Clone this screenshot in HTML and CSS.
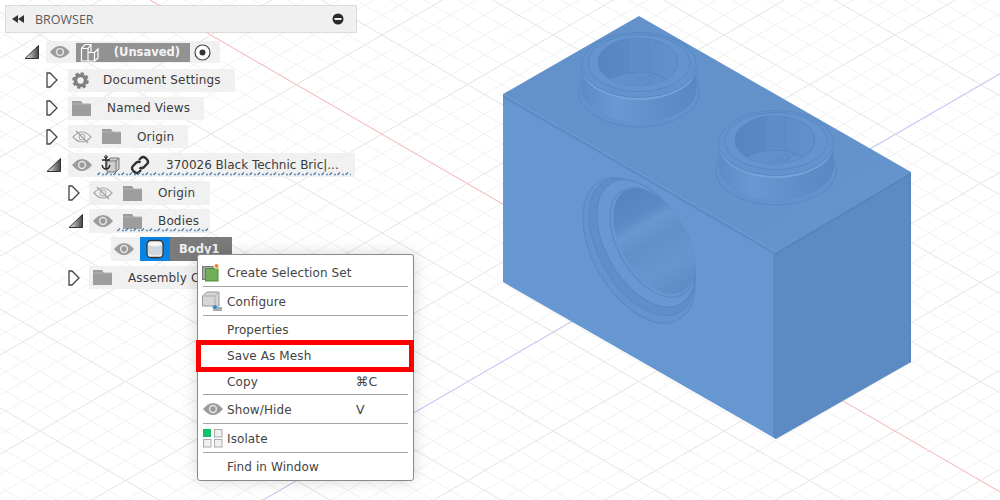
FILE: index.html
```html
<!DOCTYPE html>
<html lang="en">
<head>
<meta charset="utf-8">
<title>Browser</title>
<link rel="stylesheet" href="styles.css">
</head>
<body>
<svg class="canvas" width="1000" height="500" viewBox="0 0 1000 500">
  <defs>
    <pattern id="grid" patternUnits="userSpaceOnUse" x="40" y="35" width="171" height="99">
      <g class="gm">
        <path d="M0 -79.2L171 19.8M0 -59.4L171 39.6M0 -39.6L171 59.4M0 -19.8L171 79.2M0 19.8L171 118.8M0 39.6L171 138.6M0 59.4L171 158.4M0 79.2L171 178.2"/>
        <path d="M0 19.8L171 -79.2M0 39.6L171 -59.4M0 59.4L171 -39.6M0 79.2L171 -19.8M0 118.8L171 19.8M0 138.6L171 39.6M0 158.4L171 59.4M0 178.2L171 79.2"/>
      </g>
      <g class="gj"><path d="M0 0L171 99M0 99L171 0"/></g>
    </pattern>
    <linearGradient id="side" x1="0" x2="1" y1="0" y2="0">
      <stop offset="0" stop-color="#5c8bc5"/><stop offset=".3" stop-color="#6999d3"/>
      <stop offset=".55" stop-color="#6291cb"/><stop offset="1" stop-color="#5888c2"/>
    </linearGradient>
    <linearGradient id="disc" x1="0" y1=".5" x2="1" y2=".5">
      <stop offset="0" stop-color="#5484bd"/><stop offset=".25" stop-color="#5b8ac4"/>
      <stop offset=".34" stop-color="#6898d0"/><stop offset=".5" stop-color="#6190c9"/>
      <stop offset=".75" stop-color="#6696ce"/><stop offset="1" stop-color="#5d8cc5"/>
    </linearGradient>
    <linearGradient id="face-top" x1="0" y1="0" x2="1" y2="1">
      <stop offset="0" stop-color="#6291cb"/><stop offset="1" stop-color="#6594cc"/>
    </linearGradient>
    <linearGradient id="wall" x1="0" x2="1" y1="0" y2="0">
      <stop offset="0" stop-color="#5485bf"/><stop offset=".5" stop-color="#5c8cc6"/><stop offset="1" stop-color="#6291cb"/>
    </linearGradient>
    <clipPath id="holeclip"><ellipse cx="638" cy="62" rx="40" ry="24"/></clipPath>
    <g id="stud">
      <ellipse class="ln" cx="639" cy="92" rx="60.5" ry="35" fill="#6393cc"/>
      <ellipse cx="639" cy="89" rx="57" ry="33" fill="#5e8dc7"/>
      <path d="M581.5 65V89A57.5 33 0 0 0 696.500 89V65Z" fill="url(#side)"/>
      <ellipse cx="639" cy="67" rx="57.500" ry="33" fill="#78a3d9"/>
      <ellipse class="ln" cx="639" cy="65" rx="57.500" ry="32.500" fill="#6293cd"/>
      <ellipse class="ln" cx="639" cy="63" rx="51" ry="28.500" fill="#6594ce"/>
      <ellipse class="ln" cx="638" cy="62" rx="40" ry="24" fill="url(#wall)"/>
      <g clip-path="url(#holeclip)">
        <ellipse cx="638" cy="93" rx="38" ry="21" fill="#6290ca" stroke="#5586c0"/>
        <path d="M629 37H648V72H629Z" fill="#5e8ec8"/>
        <path class="ln" d="M629 37V72M648 37V72M598 55V66M602 54V67M677 54V66M680 56V66" fill="none"/>
        <path class="ln" d="M632 85Q636 78 642 78Q640 84 636 86M642 84Q646 76 652 76Q651 82 646 85M650 83Q654 76 660 75" fill="none"/>
      </g>
    </g>
  </defs>
  <rect width="1000" height="500" fill="#fff"/>
  <rect width="1000" height="500" fill="url(#grid)"/>
  <path class="red" d="M150 0L1014 500"/>
  <path class="blue" d="M1000 74L258 503"/>

  <path d="M639 16L911 172L776 252L503 94Z" fill="url(#face-top)"/>
  <path d="M503 94L776 252V439L503 282Z" fill="#6797d1"/>
  <path d="M776 252L911 172V362L776 439Z" fill="#5c8ac2"/>
  <path d="M503 94L776 252V256L503 98Z" fill="#6191cb"/>
  <path d="M503 96L773 252" class="ln"/>
  <path d="M773 252V437L776 439V252Z" fill="#5a89c3"/>
  <path d="M776 252L911 172V175L776 255Z" fill="#5785be"/>
  <path d="M911 173V362L909 363V174Z" fill="#5785be"/>
  <use href="#stud"/>
  <use href="#stud" x="137" y="78"/>
  <g>
    <ellipse class="ln" cx="639" cy="250.500" rx="79.500" ry="45.600" transform="rotate(60 639 250.500)" fill="#6494ce"/>
    <ellipse class="ln" cx="642" cy="247" rx="75" ry="43" transform="rotate(60 642 247)" fill="#5f8ec9"/>
    <ellipse class="ln" cx="646" cy="243.500" rx="69.600" ry="39.900" transform="rotate(60 646 243.500)" fill="#6897d1"/>
    <ellipse class="ln" cx="652.500" cy="242.500" rx="60" ry="34.500" transform="rotate(60 652.500 242.500)" fill="#6796d0"/>
    <ellipse cx="654" cy="241" rx="58" ry="33" transform="rotate(60 654 241)" fill="url(#disc)"/>
  </g>
</svg>

<section class="browser">
  <header class="browser-head">
    <svg class="ic-rew" width="12" height="8" viewBox="0 0 12 8"><path d="M6 0V8L0 4ZM12 0V8L6 4Z"/></svg>
    <span class="browser-title">BROWSER</span>
    <svg class="ic-min" width="12" height="12" viewBox="0 0 12 12"><circle cx="6" cy="6" r="5.500"/><rect x="2.500" y="5" width="7" height="2"/></svg>
  </header>
  <div class="tree">
    <div class="row row-root">
      <span class="chev"><svg width="16" height="16" viewBox="0 0 16 16"><use href="#open"/></svg></span>
      <div class="band band-root">
        <svg class="eye" width="20" height="12" viewBox="0 0 20 12"><use href="#eye"/></svg>
        <span class="root-box">
          <svg width="20" height="19" viewBox="0 0 20 19" class="ic-doc"><g fill="none" stroke="#fff" stroke-width="1.200"><path d="M1.500 5.500L5 1.500H11V9.500"/><path d="M1.500 5.500H8V18H1.500Z"/><path d="M8 9.500H14.500V18H8"/><path d="M8 5.500L11 1.500M11 9.500H14.500L18 6V15L14.500 18"/></g></svg>
          <span class="root-name">(Unsaved)</span>
        </span>
        <svg class="target" width="17" height="17" viewBox="0 0 17 17"><circle cx="8.500" cy="8.500" r="7.500" fill="#fff" stroke="#444" stroke-width="1.200"/><circle cx="8.500" cy="8.500" r="3" fill="#333"/></svg>
      </div>
    </div>
    <div class="row lv1">
      <span class="chev"><svg width="12" height="16" viewBox="0 0 12 16"><use href="#closed"/></svg></span>
      <div class="band">
        <svg class="ic" width="17" height="17" viewBox="0 0 17 17"><circle cx="8.500" cy="8.500" r="5" fill="none" stroke="#808080" stroke-width="3.600"/><circle cx="8.500" cy="8.500" r="7" fill="none" stroke="#808080" stroke-width="2.600" stroke-dasharray="3.200 2.300"/></svg>
        <span class="lbl lbl-gear">Document Settings</span>
      </div>
    </div>
    <div class="row lv1">
      <span class="chev"><svg width="12" height="16" viewBox="0 0 12 16"><use href="#closed"/></svg></span>
      <div class="band">
        <svg class="ic" width="19" height="15" viewBox="0 0 19 15"><use href="#folder"/></svg>
        <span class="lbl">Named Views</span>
      </div>
    </div>
    <div class="row lv1">
      <span class="chev"><svg width="12" height="16" viewBox="0 0 12 16"><use href="#closed"/></svg></span>
      <div class="band">
        <svg class="ic" width="20" height="14" viewBox="0 0 20 14"><use href="#eyeoff"/></svg>
        <svg class="ic ic-next" width="19" height="15" viewBox="0 0 19 15"><use href="#folder"/></svg>
        <span class="lbl">Origin</span>
      </div>
    </div>
    <div class="row lv1 row-tall">
      <span class="chev"><svg width="16" height="16" viewBox="0 0 16 16"><use href="#open"/></svg></span>
      <div class="band band-ref">
        <svg class="ic" width="20" height="12" viewBox="0 0 20 12"><use href="#eye"/></svg>
        <svg class="ic ic-anchor" width="22" height="20" viewBox="0 0 22 20"><path d="M7 6L10 3H19V14L16 17H7Z" fill="#cfcfcf" stroke="#777"/><path d="M7 6H16V17M16 6L19 3" fill="none" stroke="#777"/><path d="M6 2V13M2 5H10M2 10Q3 14 6 14T10 10" fill="none" stroke="#222" stroke-width="1.300"/><circle cx="6" cy="2" r="1.300" fill="none" stroke="#222"/></svg>
        <svg class="ic ic-link" width="20" height="20" viewBox="0 0 20 20"><g fill="none" stroke="#2e2e2e" stroke-width="2.400"><path d="M9 5L11 3Q13 1 15.500 3L17 4.500Q19 7 17 9L13.500 12.500Q11.500 14 9.500 12.500"/><path d="M11 15L9 17Q7 19 4.500 17L3 15.500Q1 13 3 11L6.500 7.500Q8.500 6 10.500 7.500"/></g></svg>
        <span class="lbl lbl-ref">370026 Black Technic Bric|...</span>
        <svg class="wave wave-ref" width="254" height="5"><rect width="254" height="5" fill="url(#wv)"/></svg>
      </div>
    </div>
    <div class="row lv2">
      <span class="chev"><svg width="12" height="16" viewBox="0 0 12 16"><use href="#closed"/></svg></span>
      <div class="band band-sub">
        <svg class="ic" width="20" height="14" viewBox="0 0 20 14"><use href="#eyeoff"/></svg>
        <svg class="ic ic-next" width="19" height="15" viewBox="0 0 19 15"><use href="#folder"/></svg>
        <span class="lbl">Origin</span>
      </div>
    </div>
    <div class="row lv2">
      <span class="chev"><svg width="16" height="16" viewBox="0 0 16 16"><use href="#open"/></svg></span>
      <div class="band band-sub">
        <svg class="ic" width="20" height="12" viewBox="0 0 20 12"><use href="#eye"/></svg>
        <svg class="ic ic-next" width="19" height="15" viewBox="0 0 19 15"><use href="#folder"/></svg>
        <span class="lbl">Bodies</span>
        <svg class="wave wave-bodies" width="91" height="5"><rect width="91" height="5" fill="url(#wv)"/></svg>
      </div>
    </div>
    <div class="row lv3">
      <div class="band band-body">
        <svg class="ic" width="20" height="12" viewBox="0 0 20 12"><use href="#eye"/></svg>
        <span class="body-ic"><svg width="20" height="20" viewBox="0 0 20 20"><rect x="2" y="1.500" width="16" height="17" rx="4" fill="#f5f5f5" stroke="#333" stroke-width="1.300"/><path d="M3 6Q10 9 17 6V15Q10 18 3 15Z" fill="#cfd5dd"/></svg></span>
        <span class="body-name">Body1</span>
      </div>
    </div>
    <div class="row lv2">
      <span class="chev"><svg width="12" height="16" viewBox="0 0 12 16"><use href="#closed"/></svg></span>
      <div class="band">
        <svg class="ic" width="19" height="15" viewBox="0 0 19 15"><use href="#folder"/></svg>
        <span class="lbl">Assembly Contexts</span>
      </div>
    </div>
  </div>
</section>

<nav class="menu">
  <div class="item item-ic"><svg class="mi" width="22" height="20" viewBox="0 0 22 20"><rect x=".5" y="4.500" width="13" height="13" fill="#a8a8a8" stroke="#777"/><rect x="3.500" y="6.500" width="12.500" height="12.500" fill="#6fae55" stroke="#4f8a3c"/><circle cx="14.500" cy="4" r="2.500" fill="#f08a2c" stroke="#fff"/></svg><span>Create Selection Set</span></div>
  <hr class="sep">
  <div class="item item-ic"><svg class="mi" width="22" height="20" viewBox="0 0 22 20"><path d="M.5 5L5 1H17V15H.5Z" fill="#d6d6d6" stroke="#999"/><path d="M.5 5H13V15M13 5L17 1" fill="none" stroke="#aaa"/><path d="M11 17H20M11 19H20" stroke="#555"/><path d="M13 14V18M10.500 16H15" stroke="#1e88d8" stroke-width="1.300"/></svg><span>Configure</span></div>
  <hr class="sep">
  <div class="item"><span>Properties</span></div>
  <div class="item item-mark"><span>Save As Mesh</span></div>
  <div class="item"><span>Copy</span><kbd class="key">⌘C</kbd></div>
  <hr class="sep">
  <div class="item item-ic"><svg class="mi" width="20" height="12" viewBox="0 0 20 12"><use href="#eye"/></svg><span>Show/Hide</span><kbd class="key">V</kbd></div>
  <hr class="sep">
  <div class="item item-ic"><svg class="mi" width="20" height="20" viewBox="0 0 20 20"><rect x="0" y="1" width="8" height="8" fill="#14c06e"/><rect x="11.500" y="1.500" width="7.500" height="7.500" fill="#f0f0f0" stroke="#aaa"/><rect x=".5" y="11.500" width="7.500" height="7.500" fill="#f0f0f0" stroke="#aaa"/><rect x="11.500" y="11.500" width="7.500" height="7.500" fill="#f0f0f0" stroke="#aaa"/></svg><span>Isolate</span></div>
  <hr class="sep">
  <div class="item"><span>Find in Window</span></div>
</nav>

<svg class="defs" width="0" height="0">
  <defs>
    <symbol id="eye" viewBox="0 0 20 12"><path d="M0 6Q10 -6 20 6Q10 18 0 6Z" fill="#9b9b9b"/><circle cx="10" cy="6" r="3.400" fill="#9b9b9b" stroke="#e4e4e4" stroke-width="1.500"/></symbol>
    <symbol id="eyeoff" viewBox="0 0 20 14"><path d="M1 7Q10 -3 19 7Q10 17 1 7Z" fill="none" stroke="#a8a8a8" stroke-width="1.200"/><circle cx="10" cy="7" r="3" fill="none" stroke="#a8a8a8"/><path d="M4 1L16 13" stroke="#a8a8a8" stroke-width="1.400"/></symbol>
    <symbol id="folder" viewBox="0 0 19 15"><path d="M0 0H9L11 3H19V15H0Z" fill="#9d9d9d"/><path d="M0 3H19" stroke="#b5b5b5"/></symbol>
    <symbol id="open" viewBox="0 0 16 16"><linearGradient id="og" x1="0" y1="0" x2="1" y2="0"><stop offset="0" stop-color="#eee"/><stop offset="1" stop-color="#444"/></linearGradient><path d="M1 14.500L14.500 1.500V14.500Z" fill="url(#og)" stroke="#333"/></symbol>
    <symbol id="closed" viewBox="0 0 12 16"><path d="M1 1H4L11 8L4 15H1Z" fill="#fbfbfb" stroke="#444" stroke-width="1.300"/></symbol>
    <pattern id="wv" patternUnits="userSpaceOnUse" width="8" height="5"><path d="M.5 4L3 1.500" stroke="#4f7fae" stroke-width="1.500"/><circle cx="6" cy="3.500" r=".9" fill="#4f7fae"/></pattern>
  </defs>
</svg>
</body>
</html>
```
FILE: styles.css
```css
* { box-sizing: border-box; }
html, body { margin: 0; padding: 0; }
body {
  width: 1000px;
  height: 500px;
  overflow: hidden;
  position: relative;
  font-family: "DejaVu Sans", sans-serif;
  font-size: 12px;
  color: #3c3c3c;
  background: #fff;
}
.canvas { position: absolute; left: 0; top: 0; }
.defs { position: absolute; }
.gm { stroke: #f1f1f1; stroke-width: 1; fill: none; }
.gj { stroke: #e3e3e3; stroke-width: 1; fill: none; }
.red { stroke: #fbbcbc; stroke-width: 1; fill: none; }
.blue { stroke: #c4c4fb; stroke-width: 1; fill: none; }
.ln { stroke: #5888c3; stroke-width: 1; }

.browser { position: relative; width: 352px; margin: 5px 0 0 5px; }
.browser-head {
  display: flex;
  align-items: center;
  height: 28px;
  padding: 0 12px 0 6px;
  background: #f0f0f0;
  border: 1px solid #dcdcdc;
}
.ic-rew { fill: #333; }
.browser-title {
  flex: 1;
  margin-left: 11px;
  font-family: "Open Sans", sans-serif;
  font-size: 12.500px;
  color: #5c5c5c;
}
.ic-min circle { fill: #2a2a2a; }
.ic-min rect { fill: #eee; }

.tree { padding-top: 5px; }
.row { display: flex; align-items: center; height: 28.200px; }
.row-root { padding-left: 19px; }
.lv1 { padding-left: 41px; }
.lv2 { padding-left: 63px; }
.lv3 { padding-left: 106px; }
.chev { display: flex; align-items: center; width: 22px; height: 16px; flex: none; }
.band {
  display: flex;
  align-items: center;
  position: relative;
  height: 23px;
  padding: 0 14px 0 4px;
  background: rgba(238, 238, 238, .85);
}
.lv2 .chev { width: 21px; }
.band-root { width: 174px; padding: 0 9px 0 4px; height: 22px; }
.band-root .eye { margin-right: 6px; }
.root-box {
  display: flex;
  align-items: center;
  width: 115px;
  height: 19px;
  background: #929292;
  padding-left: 4px;
}
.root-name { margin-left: 14px; font-weight: 700; font-size: 11.500px; color: #f4f4f4; }
.target { margin-left: 4px; flex: none; }
.ic { flex: none; }
.ic-next { margin-left: 10px; }
.ic-anchor { margin-left: 8px; }
.ic-link { margin-left: 8px; }
.lbl { margin-left: 16px; white-space: nowrap; letter-spacing: .15px; }
.lbl-gear { margin-left: 14px; }
.lbl-ref { margin-left: 16px; letter-spacing: 0; }
.band-ref { width: 287px; height: 24px; }
.band-sub { width: 121px; height: 24px; }
.wave { position: absolute; }
.wave-ref { left: 29px; bottom: 1px; }
.wave-bodies { left: 28px; bottom: 1px; }
.band-body { height: 24px; padding: 0; padding-left: 3px; width: 121px; }
.body-ic {
  display: flex;
  align-items: center;
  justify-content: center;
  width: 30px;
  height: 24px;
  margin-left: 6px;
  background: #0a84e4;
}
.body-name {
  display: flex;
  align-items: center;
  flex: 1;
  height: 24px;
  padding-left: 9px;
  background: #7b7b7b;
  color: #f2f2f2;
  font-weight: 700;
  font-size: 11.500px;
}

.menu {
  position: absolute;
  left: 197px;
  top: 254px;
  width: 217px;
  height: 227px;
  padding: 3px 0 0;
  background: #fff;
  border: 1px solid #8a8a8a;
  border-radius: 3px;
  box-shadow: 0 0 16px rgba(0, 0, 0, .16);
}
.item {
  display: flex;
  align-items: center;
  position: relative;
  height: 26px;
  padding-left: 29px;
  padding-top: 1px;
  letter-spacing: .1px;
  color: #444;
}
.item-ic { height: 28px; padding-left: 4px; padding-top: 0; }
.item-ic span { padding-top: 1px; }
.mi { flex: none; width: 22px; margin-right: 3px; }
.sep { height: 1px; margin: 0 5px; border: 0; background: #a4a4a4; }
.key { position: absolute; left: 158px; font-family: inherit; font-size: 12.500px; }
.item-mark::after {
  content: "";
  position: absolute;
  left: -2px;
  right: -1px;
  top: -2px;
  bottom: -4px;
  border: 5px solid #fe0000;
}
```
